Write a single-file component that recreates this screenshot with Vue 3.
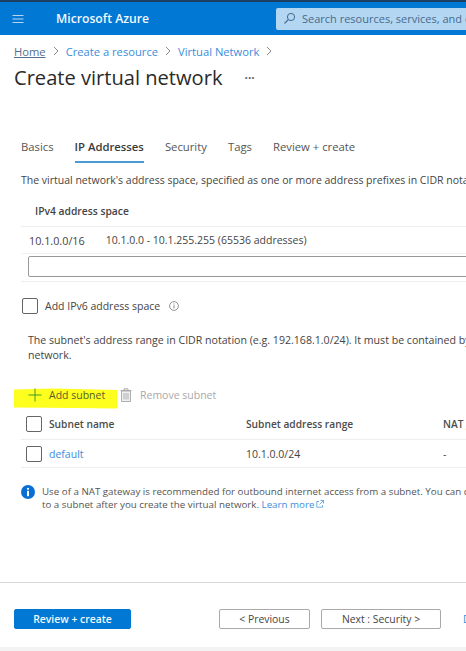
<script setup>
const tabs = [
  { label: 'Basics', active: false },
  { label: 'IP Addresses', active: true },
  { label: 'Security', active: false },
  { label: 'Tags', active: false },
  { label: 'Review + create', active: false },
]
</script>

<template>
  <div class="page">
    <header class="topbar">
      <svg class="menu" width="14" height="10" viewBox="0 0 14 10"><path d="M1.500 1.500h11M1.500 5h11M1.500 8.500h11" stroke="#b5d5f0" stroke-width="1.100" fill="none"/></svg>
      <span class="brand">Microsoft Azure</span>
      <div class="search">
        <svg width="13" height="13" viewBox="0 0 13 13"><circle cx="8" cy="5" r="3.600" fill="none" stroke="#44688c" stroke-width="1"/><path d="M5.300 7.600L1.500 11.500" stroke="#44688c" stroke-width="1.100"/></svg>
        <span>Search resources, services, and docs (G+/)</span>
      </div>
    </header>

    <nav class="crumbs">
      <a class="home">Home</a>
      <svg width="6" height="10" viewBox="0 0 6 10"><path d="M1 1l4 4-4 4" fill="none" stroke="#8a8a8a"/></svg>
      <a>Create a resource</a>
      <svg width="6" height="10" viewBox="0 0 6 10"><path d="M1 1l4 4-4 4" fill="none" stroke="#8a8a8a"/></svg>
      <a>Virtual Network</a>
      <svg width="6" height="10" viewBox="0 0 6 10"><path d="M1 1l4 4-4 4" fill="none" stroke="#8a8a8a"/></svg>
    </nav>

    <div class="title-row">
      <h1>Create virtual network</h1>
      <span class="dots">···</span>
    </div>

    <div class="tabs">
      <div v-for="t in tabs" :key="t.label" class="tab" :class="{ active: t.active }">{{ t.label }}</div>
    </div>

    <p class="desc">The virtual network's address space, specified as one or more address prefixes in CIDR notation (e.g. 192.168.1.0/24).</p>

    <div class="v4-head">IPv4 address space</div>
    <div class="v4-row">
      <span class="cidr">10.1.0.0/16</span>
      <span>10.1.0.0 - 10.1.255.255 (65536 addresses)</span>
    </div>
    <div class="v4-input"><div class="input"></div></div>

    <label class="v6">
      <span class="check"></span>
      <span>Add IPv6 address space</span>
      <svg class="v6-info" width="10" height="10" viewBox="0 0 10 10"><circle cx="5" cy="5" r="4.400" fill="none" stroke="#666" stroke-width=".7"/><path d="M5 4.300v3M5 2.500v1" stroke="#666" stroke-width=".8"/></svg>
    </label>

    <p class="sub-desc">The subnet's address range in CIDR notation (e.g. 192.168.1.0/24). It must be contained by the address space of the virtual<br>network.</p>

    <div class="toolbar">
      <svg class="marker" width="103" height="21" viewBox="0 0 103 21" preserveAspectRatio="none"><path d="M0 1.500L40 .5 103 2 103 20.500 60 20 0 19.500Z" fill="#ffff1f"/></svg>
      <div class="add">
        <svg width="14" height="14" viewBox="0 0 14 14"><path d="M7 .5v13M.5 7h13" stroke="#3c9a2c" stroke-width="1"/></svg>
        <span>Add subnet</span>
      </div>
      <div class="remove">
        <svg width="12" height="14" viewBox="0 0 12 14"><path d="M1.500 3h9v10.500h-9zM.5 2.500h11M4 2.500V.8h4v1.700M4 5v6.500M6 5v6.500M8 5v6.500" fill="#f0f0f0" stroke="#a6a6a6" stroke-width=".9"/></svg>
        <span>Remove subnet</span>
      </div>
    </div>

    <div class="row head">
      <span class="check"></span>
      <span class="c-name">Subnet name</span>
      <span class="c-range">Subnet address range</span>
      <span>NAT gateway</span>
    </div>
    <div class="row body">
      <span class="check"></span>
      <a class="c-name">default</a>
      <span class="c-range">10.1.0.0/24</span>
      <span>-</span>
    </div>

    <div class="notice">
      <svg width="14" height="14" viewBox="0 0 14 14"><circle cx="7" cy="7" r="7" fill="#0a6fd4"/><rect x="6" y="5.800" width="2" height="5.400" fill="#fff"/><circle cx="7" cy="3.800" r="1.100" fill="#fff"/></svg>
      <div class="notice-text">
        <div>Use of a NAT gateway is recommended for outbound internet access from a subnet. You can configure</div>
        <div>to a subnet after you create the virtual network. <a>Learn more</a>
          <svg class="ext" width="8" height="8" viewBox="0 0 8 8"><path d="M3 1.500H.8v5.700h5.700V5M4.500.5h3v3M7.500.5L3.500 4.500" fill="none" stroke="#3b8ddb" stroke-width=".7"/></svg>
        </div>
      </div>
    </div>

    <footer class="footer">
      <button class="primary">Review + create</button>
      <button class="ghost prev">&lt; Previous</button>
      <button class="ghost next">Next : Security &gt;</button>
      <span class="dl">Download</span>
    </footer>
    <div class="strip"></div>
  </div>
</template>

<style scoped>
.page {
  width: 466px;
  height: 651px;
  overflow: hidden;
  display: flex;
  flex-direction: column;
  background: #fff;
  color: #444;
  font-family: "Open Sans", "Noto Sans", sans-serif;
  font-size: 10.500px;
  white-space: nowrap;
}
svg { flex: none; }
.topbar {
  height: 35px;
  box-sizing: border-box;
  flex: none;
  border-top: 2px solid #1d3e63;
  background: #0078d4;
  display: flex;
  align-items: center;
  padding-left: 11px;
}
.brand {
  flex: none;
  margin-left: 31px;
  color: #f2f8fd;
  font-size: 12.200px;
  font-weight: 600;
  width: 220px;
}
.search {
  flex: none;
  width: 240px;
  height: 22px;
  border-radius: 2px;
  background: #b3d6f2;
  display: flex;
  align-items: center;
  gap: 6px;
  padding-left: 7px;
  color: #4a6a8a;
  font-size: 11px;
}
.crumbs {
  margin: 8px 0 0 14px;
  height: 16px;
  display: flex;
  align-items: center;
  gap: 7px;
  font-size: 11.200px;
  color: #3d8fdc;
}
.crumbs .home { color: #55708c; text-decoration: underline; }
.title-row {
  margin: 4px 0 0 14px;
  height: 28px;
  display: flex;
  align-items: center;
}
h1 {
  margin: 0;
  font-size: 20.100px;
  font-weight: 500;
  color: #2a2a2a;
}
.dots { margin-left: 22px; font-size: 12px; font-weight: 700; color: #666; }
.tabs {
  margin: 45px 0 0 21px;
  display: flex;
  gap: 21px;
  height: 27px;
  font-size: 11.300px;
  color: #555;
}
.tab { height: 25px; line-height: 21px; }
.tab.active { font-weight: 600; color: #3a3a3a; border-bottom: 2px solid #4a9ad8; }
.desc { margin: 10px 0 0 21px; line-height: 15px; font-size: 10.500px; }
.v4-head {
  margin: 9px 0 0 21px;
  height: 29px;
  line-height: 29px;
  padding-left: 14px;
  border-bottom: 1px solid #eee;
  font-weight: 600;
  font-size: 10.300px;
}
.v4-row {
  margin-left: 21px;
  padding-left: 8px;
  height: 26px;
  display: flex;
  align-items: center;
  gap: 21px;
  border-bottom: 1px solid #f1f1f1;
}
.cidr { font-size: 10.800px; }
.v4-input {
  margin-left: 21px;
  height: 28px;
  padding: 2px 0 0 7px;
  box-sizing: border-box;
  border-bottom: 1px solid #eee;
}
.input {
  width: 460px;
  height: 21px;
  box-sizing: border-box;
  border: 1px solid #999;
  border-radius: 2px;
}
.v6 {
  margin: 16px 0 0 22px;
  display: flex;
  align-items: center;
  gap: 7px;
  height: 16px;
}
.v6-info { margin-left: 2px; }
.check {
  flex: none;
  width: 16px;
  height: 16px;
  box-sizing: border-box;
  border: 1px solid #666;
  border-radius: 2px;
  background: #fff;
}
.sub-desc {
  margin: 19px 0 0 28px;
  line-height: 15px;
  font-size: 10.600px;
}
.toolbar {
  position: relative;
  margin: 19px 0 0 14px;
  height: 26px;
  display: flex;
  align-items: center;
}
.marker { position: absolute; left: 0; top: 6px; }
.add {
  position: relative;
  display: flex;
  align-items: center;
  gap: 7px;
  margin-left: 14px;
  width: 92px;
  color: #55602a;
}
.remove {
  display: flex;
  align-items: center;
  gap: 8px;
  color: #a9a9a9;
}
.row {
  margin-left: 21px;
  padding-left: 5px;
  display: flex;
  align-items: center;
  border-bottom: 1px solid #eee;
}
.row.head { margin-top: 1px; height: 30px; font-weight: 600; font-size: 10.200px; color: #4c4c4c; }
.row.body { height: 27px; }
.c-name { flex: none; margin-left: 7px; width: 197px; }
.c-range { flex: none; width: 197px; }
a { color: #3b8ddb; }
.notice {
  margin: 17px 0 0 21px;
  display: flex;
  gap: 7px;
  font-size: 9.750px;
  line-height: 13px;
  color: #555;
}
.ext { margin-left: 2px; }
.footer {
  margin-top: auto;
  height: 65px;
  box-sizing: border-box;
  border-top: 1px solid #d8d8d8;
  padding: 26px 0 0 14px;
  display: flex;
  align-items: flex-start;
  flex: none;
}
button {
  flex: none;
  height: 20px;
  box-sizing: border-box;
  padding: 0;
  border-radius: 2px;
  font-family: inherit;
  font-size: 10.400px;
}
.primary {
  width: 117px;
  background: #0078d4;
  border: 1px solid #0078d4;
  color: #f2f8fd;
  font-weight: 600;
}
.ghost { background: #fff; border: 1px solid #a9a9a9; color: #444; }
.prev { width: 91px; margin-left: 88px; }
.next { width: 120px; margin-left: 11px; }
.dl { margin-left: 22px; color: #3b8ddb; line-height: 20px; }
.strip { flex: none; height: 4px; background: #f3f3f3; }
</style>
